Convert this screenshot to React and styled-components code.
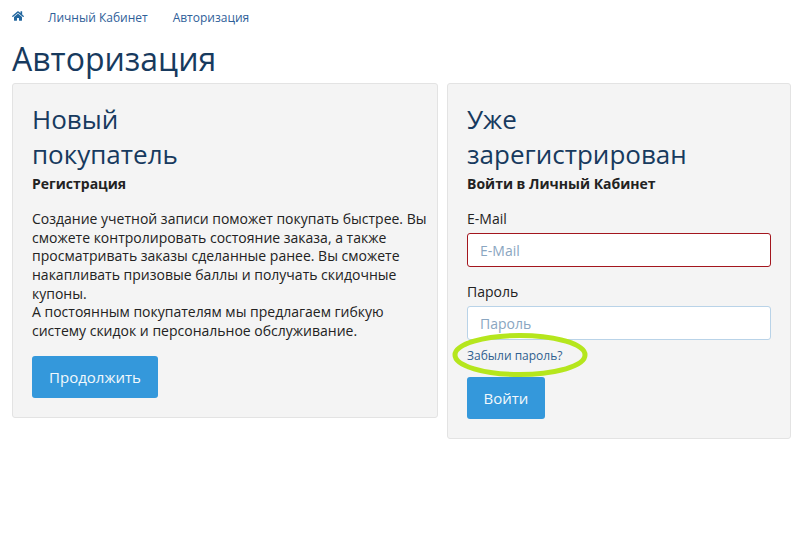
import React from "react";
import styled, { createGlobalStyle } from "styled-components";
import { FaHome } from "react-icons/fa";

const GlobalStyle = createGlobalStyle`
  html, body {
    margin: 0;
    padding: 0;
    background: #fff;
    font-family: "Open Sans", sans-serif;
    color: #222;
  }
  * {
    box-sizing: border-box;
  }
`;

const Page = styled.div`
  width: 799px;
  height: 538px;
  padding: 0 8px 0 12px;
  overflow: hidden;
`;

const Breadcrumb = styled.nav`
  display: flex;
  align-items: center;
  height: 35px;
  font-size: 12px;
  color: #2f6099;
`;

const Crumb = styled.span`
  margin-right: 25px;
`;

const HomeCrumb = styled.span`
  display: flex;
  width: 36px;
  margin-top: -4px;
  font-size: 12px;
  color: #23679f;
`;

const Heading = styled.h1`
  margin: 3px 0 4px;
  font-size: 32px;
  line-height: 41px;
  font-weight: 400;
  color: #173a5e;
`;

const Columns = styled.div`
  display: grid;
  grid-template-columns: 426px 344px;
  column-gap: 9px;
  align-items: start;
`;

const Card = styled.section`
  position: relative;
  padding: 18px 9px 19px 19px;
  background: #f4f4f4;
  border: 1px solid #e3e3e3;
  border-radius: 3px;
`;

const CardTitle = styled.h2`
  margin: 0;
  font-size: 26px;
  line-height: 35px;
  font-weight: 400;
  color: #173a5e;
`;

const CardSubtitle = styled.strong`
  display: block;
  margin-top: 2px;
  font-size: 14px;
  line-height: 20px;
  font-weight: 700;
  color: #222;
`;

const Description = styled.p`
  margin: 16px 0 15px;
  font-size: 14px;
  line-height: 18.65px;
  color: #222;
`;

const Field = styled.div`
  margin-top: ${(p) => p.$top}px;
`;

const Label = styled.label`
  display: block;
  margin-bottom: 4px;
  font-size: 14px;
  line-height: 20px;
  color: #222;
`;

const Input = styled.input`
  display: block;
  width: 304px;
  height: 34px;
  padding: 0 12px;
  font-family: inherit;
  font-size: 14px;
  color: #333;
  background: #fff;
  border: 1px solid ${(p) => (p.$error ? "#a3161e" : "#b9d3e8")};
  border-radius: 3px;
  &::placeholder {
    color: #8aa6c1;
    opacity: 1;
  }
`;

const ForgotLink = styled.a`
  display: block;
  margin: 7px 0 12px;
  font-size: 12px;
  line-height: 18px;
  color: #2f5f8f;
`;

const Button = styled.button`
  display: block;
  width: ${(p) => p.$width}px;
  height: 42px;
  padding: 0;
  font-family: inherit;
  font-size: 15px;
  color: #f2f8fc;
  background: #3498db;
  border: 0;
  border-radius: 3px;
`;

const Highlight = styled.svg`
  position: absolute;
  left: 3px;
  top: 248px;
  width: 138px;
  height: 46px;
  pointer-events: none;
`;

export default function App() {
  return (
    <Page>
      <GlobalStyle />
      <Breadcrumb>
        <HomeCrumb>
          <FaHome />
        </HomeCrumb>
        <Crumb>Личный Кабинет</Crumb>
        <Crumb>Авторизация</Crumb>
      </Breadcrumb>
      <Heading>Авторизация</Heading>
      <Columns>
        <Card>
          <CardTitle>
            Новый
            <br />
            покупатель
          </CardTitle>
          <CardSubtitle>Регистрация</CardSubtitle>
          <Description>
            Создание учетной записи поможет покупать быстрее. Вы сможете
            контролировать состояние заказа, а также просматривать заказы
            сделанные ранее. Вы сможете накапливать призовые баллы и получать
            скидочные купоны.
            <br />А постоянным покупателям мы предлагаем гибкую систему скидок и
            персональное обслуживание.
          </Description>
          <Button $width={126}>Продолжить</Button>
        </Card>
        <Card>
          <CardTitle>
            Уже
            <br />
            зарегистрирован
          </CardTitle>
          <CardSubtitle>Войти в Личный Кабинет</CardSubtitle>
          <Field $top={15}>
            <Label>E-Mail</Label>
            <Input $error placeholder="E-Mail" />
          </Field>
          <Field $top={15}>
            <Label>Пароль</Label>
            <Input placeholder="Пароль" />
          </Field>
          <ForgotLink>Забыли пароль?</ForgotLink>
          <Button $width={78}>Войти</Button>
          <Highlight viewBox="0 0 138 46">
            <ellipse cx="69" cy="23" rx="65" ry="19.5" fill="none" stroke="#b5e61d" strokeWidth="5" />
          </Highlight>
        </Card>
      </Columns>
    </Page>
  );
}
